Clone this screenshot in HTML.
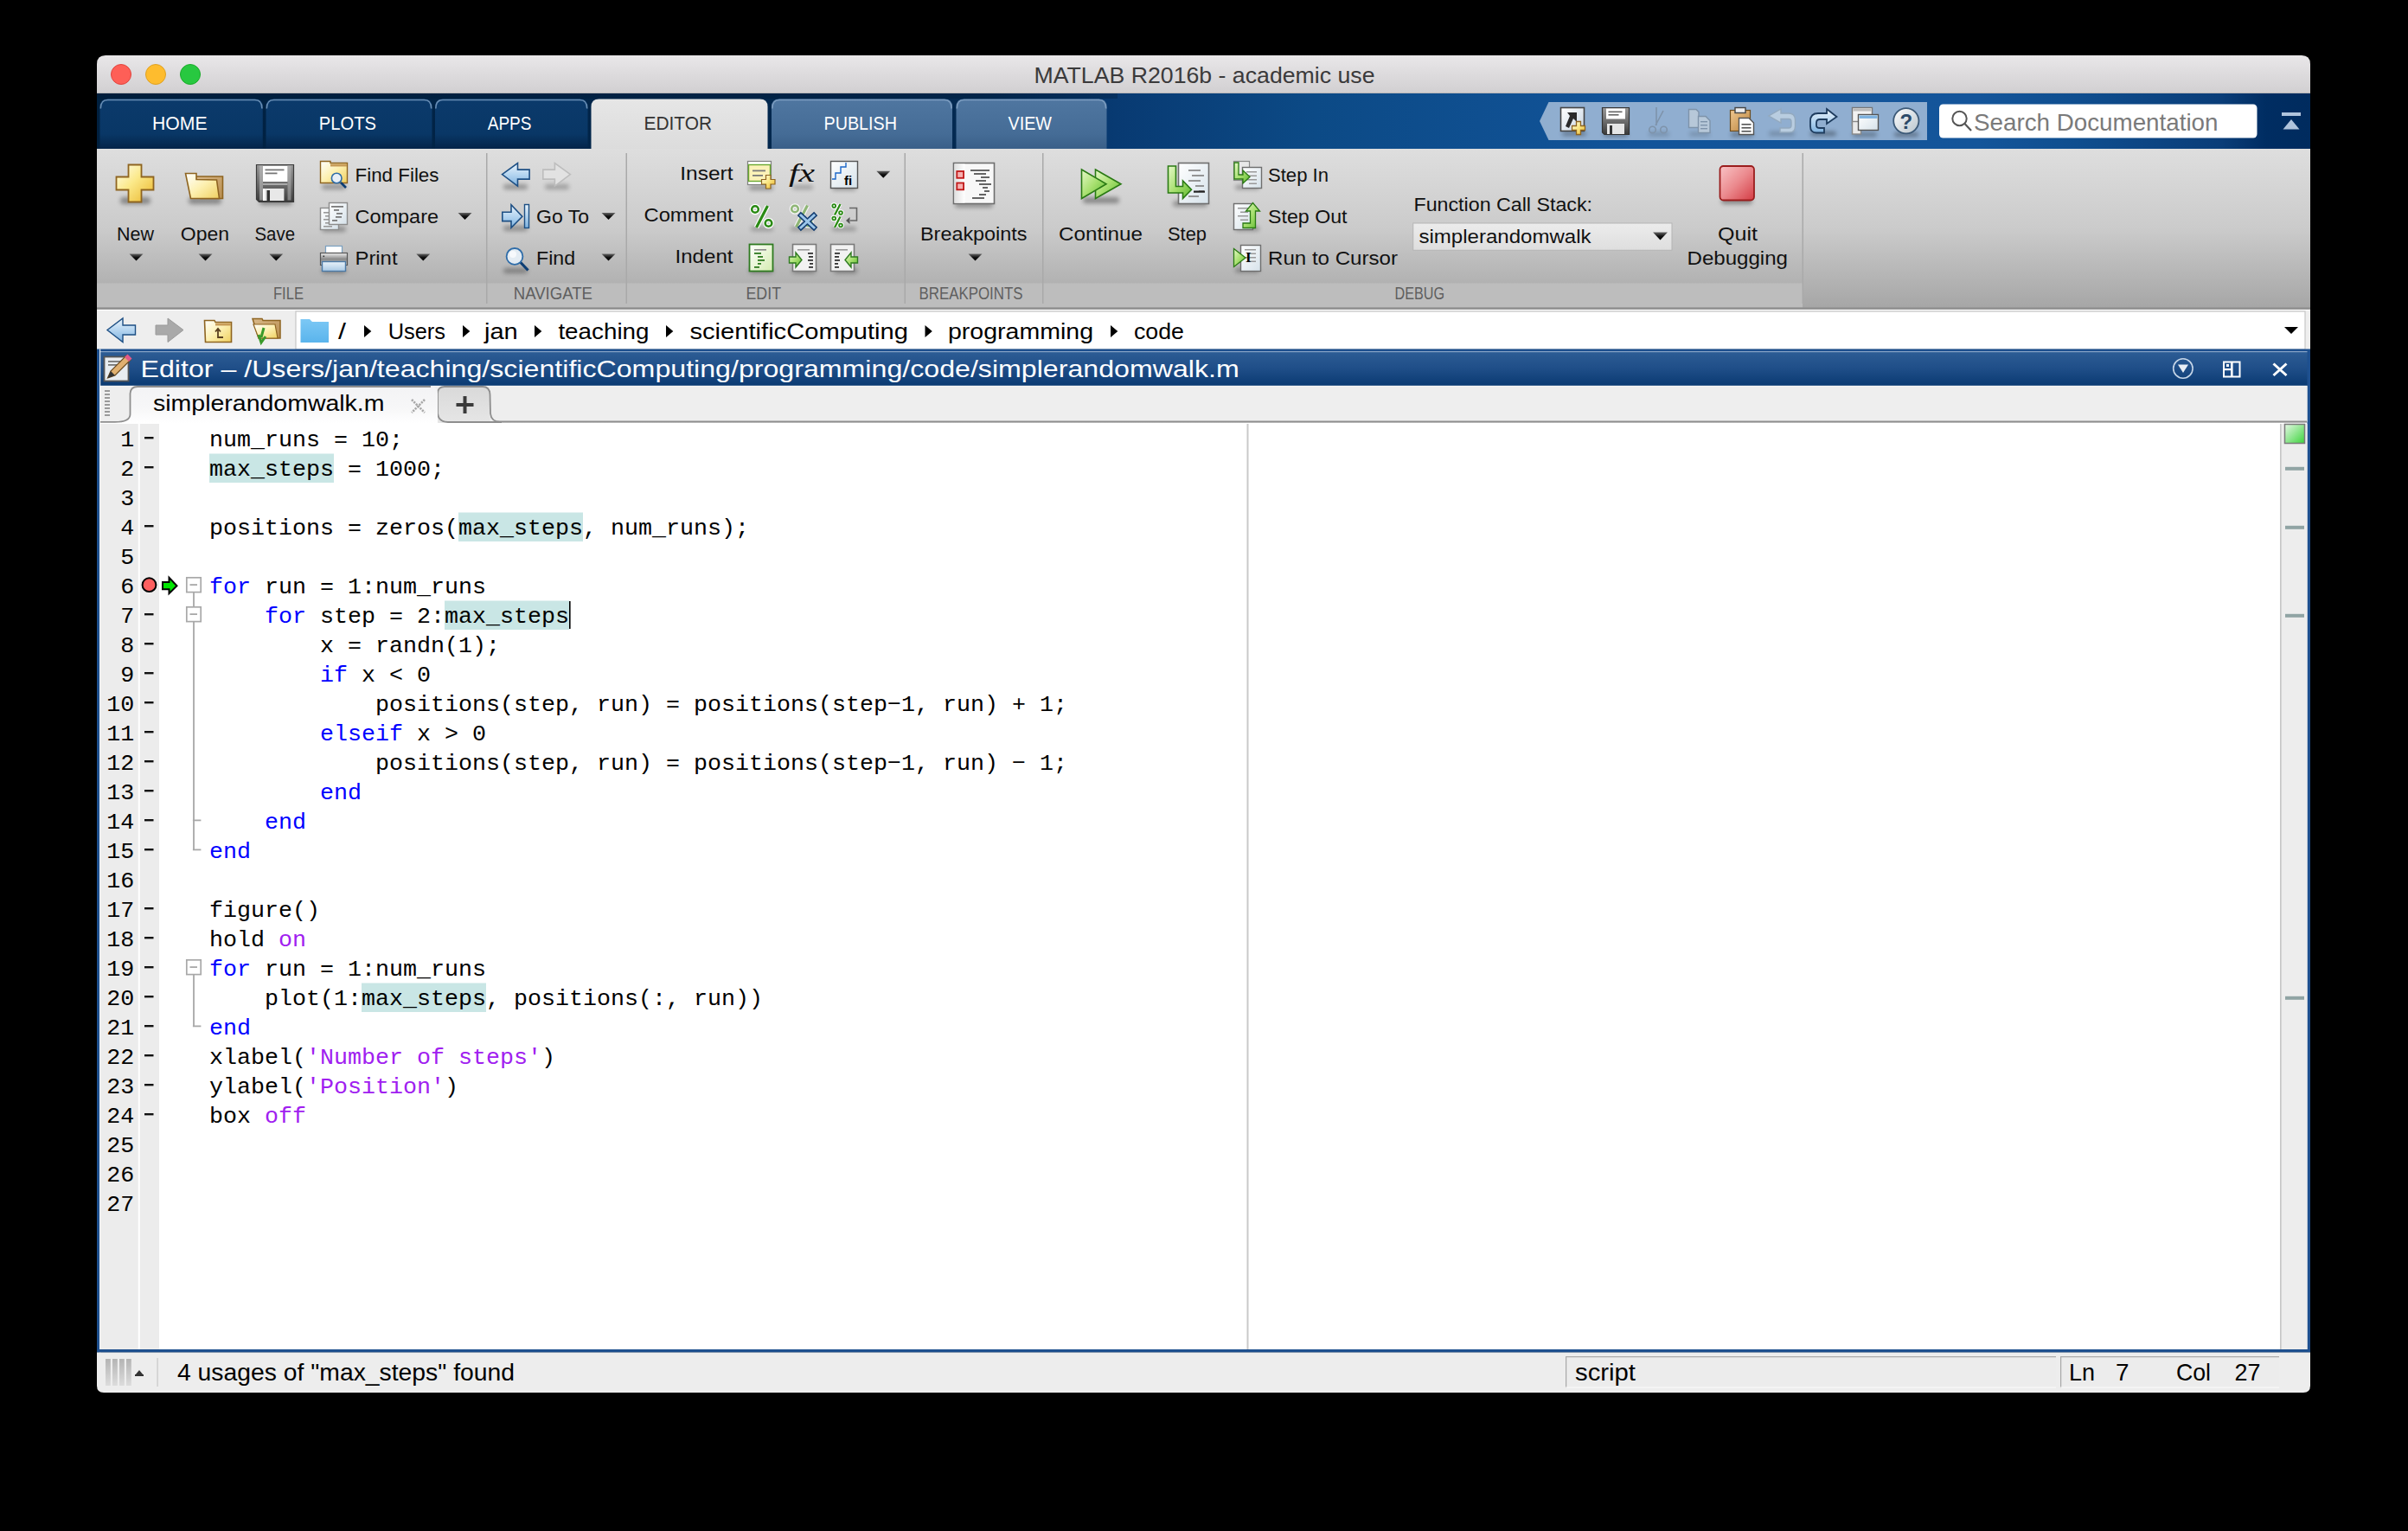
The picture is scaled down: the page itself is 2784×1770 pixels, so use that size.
<!DOCTYPE html><html><head><meta charset="utf-8"><style>html,body{margin:0;padding:0;background:#000;overflow:hidden}svg{display:block}</style></head><body><svg width="2784" height="1770" viewBox="0 0 2784 1770"><defs><filter id="blur2" x="-30%" y="-100%" width="160%" height="300%"><feGaussianBlur stdDeviation="2.6"/></filter><filter id="blur1" x="-30%" y="-100%" width="160%" height="300%"><feGaussianBlur stdDeviation="1"/></filter><linearGradient id="gold" x1="0" y1="0" x2="1" y2="1"><stop offset="0" stop-color="#fffef0"/><stop offset="0.45" stop-color="#fbe98a"/><stop offset="1" stop-color="#eab52a"/></linearGradient><linearGradient id="goldf" x1="0" y1="0" x2="1" y2="1"><stop offset="0" stop-color="#ffffff"/><stop offset="0.5" stop-color="#fdf0b0"/><stop offset="1" stop-color="#efd060"/></linearGradient><linearGradient id="tan" x1="0" y1="0" x2="1" y2="1"><stop offset="0" stop-color="#d9b98a"/><stop offset="1" stop-color="#b88d4e"/></linearGradient><linearGradient id="floppy" x1="0" y1="0" x2="0" y2="1"><stop offset="0" stop-color="#9a9a9a"/><stop offset="0.5" stop-color="#6e6e6e"/><stop offset="1" stop-color="#3a3a3a"/></linearGradient><linearGradient id="blueArrow" x1="0" y1="0" x2="0" y2="1"><stop offset="0" stop-color="#eaf4fc"/><stop offset="0.5" stop-color="#b5d5f0"/><stop offset="1" stop-color="#7eb2df"/></linearGradient><linearGradient id="page" x1="0" y1="0" x2="1" y2="1"><stop offset="0" stop-color="#ffffff"/><stop offset="1" stop-color="#d6e2ea"/></linearGradient><linearGradient id="pageg" x1="0" y1="0" x2="1" y2="1"><stop offset="0" stop-color="#ffffff"/><stop offset="1" stop-color="#c8d9c8"/></linearGradient><linearGradient id="greenA" x1="0" y1="0" x2="1" y2="1"><stop offset="0" stop-color="#e6f9c8"/><stop offset="0.5" stop-color="#a8e070"/><stop offset="1" stop-color="#5cb82c"/></linearGradient><linearGradient id="greenPage" x1="0" y1="0" x2="1" y2="1"><stop offset="0" stop-color="#ffffff"/><stop offset="1" stop-color="#d4ecb0"/></linearGradient><linearGradient id="redq" x1="0" y1="0" x2="1" y2="1"><stop offset="0" stop-color="#f9c4c6"/><stop offset="0.5" stop-color="#eb8a8e"/><stop offset="1" stop-color="#d43c44"/></linearGradient><linearGradient id="printer" x1="0" y1="0" x2="0" y2="1"><stop offset="0" stop-color="#f0f0f0"/><stop offset="0.5" stop-color="#8a8a8a"/><stop offset="1" stop-color="#c8c8c8"/></linearGradient><linearGradient id="lightblue" x1="0" y1="0" x2="0" y2="1"><stop offset="0" stop-color="#eaf3fa"/><stop offset="1" stop-color="#a9c9e4"/></linearGradient><linearGradient id="arrowTri" x1="0" y1="0" x2="0" y2="1"><stop offset="0" stop-color="#666"/><stop offset="0.5" stop-color="#111"/><stop offset="1" stop-color="#000"/></linearGradient><clipPath id="win"><path d="M112,74 Q112,64 122,64 L2661,64 Q2671,64 2671,74 L2671,1602 Q2671,1610 2663,1610 L120,1610 Q112,1610 112,1602 Z"/></clipPath><linearGradient id="tb" x1="0" y1="0" x2="0" y2="1"><stop offset="0" stop-color="#e9e7e9"/><stop offset="1" stop-color="#d1cfd1"/></linearGradient><linearGradient id="strip" x1="0" y1="0" x2="1" y2="0"><stop offset="0" stop-color="#00203f"/><stop offset="0.4" stop-color="#042a52"/><stop offset="0.46" stop-color="#083a72"/><stop offset="0.55" stop-color="#0c4a86"/><stop offset="0.7" stop-color="#12549a"/><stop offset="0.85" stop-color="#14559a"/><stop offset="0.894" stop-color="#0f4e8f"/><stop offset="0.96" stop-color="#0a3d78"/><stop offset="0.98" stop-color="#002d62"/><stop offset="1" stop-color="#002b5e"/></linearGradient><linearGradient id="tabdark" x1="0" y1="0" x2="0" y2="1"><stop offset="0" stop-color="#0b3a6b"/><stop offset="0.7" stop-color="#093766"/><stop offset="1" stop-color="#042449"/></linearGradient><linearGradient id="tablight" x1="0" y1="0" x2="0" y2="1"><stop offset="0" stop-color="#4f76a0"/><stop offset="0.7" stop-color="#456c96"/><stop offset="1" stop-color="#3a5f88"/></linearGradient><linearGradient id="tabsel" x1="0" y1="0" x2="0" y2="1"><stop offset="0" stop-color="#e6e6e6"/><stop offset="1" stop-color="#dcdcdc"/></linearGradient><linearGradient id="rib" x1="0" y1="0" x2="0" y2="1"><stop offset="0" stop-color="#dedede"/><stop offset="0.5" stop-color="#cbcbcb"/><stop offset="1" stop-color="#a6a6a6"/></linearGradient><linearGradient id="scbg" x1="0" y1="0" x2="1" y2="1"><stop offset="0" stop-color="#ffffff"/><stop offset="1" stop-color="#c9d6e2"/></linearGradient><linearGradient id="clip" x1="0" y1="0" x2="1" y2="1"><stop offset="0" stop-color="#f0c890"/><stop offset="1" stop-color="#b8823c"/></linearGradient><linearGradient id="helpg" x1="0" y1="0" x2="1" y2="1"><stop offset="0" stop-color="#ffffff"/><stop offset="1" stop-color="#b8c4cc"/></linearGradient><linearGradient id="ddbox" x1="0" y1="0" x2="0" y2="1"><stop offset="0" stop-color="#ececec"/><stop offset="1" stop-color="#dedede"/></linearGradient><linearGradient id="bpstrip" x1="0" y1="0" x2="1" y2="0"><stop offset="0" stop-color="#e0e0e0"/><stop offset="1" stop-color="#ffffff"/></linearGradient><linearGradient id="bluef" x1="0" y1="0" x2="0" y2="1"><stop offset="0" stop-color="#7cc8f5"/><stop offset="1" stop-color="#5ab4ec"/></linearGradient><linearGradient id="edtitle" x1="0" y1="0" x2="0" y2="1"><stop offset="0" stop-color="#2d5d95"/><stop offset="0.5" stop-color="#1f4e88"/><stop offset="1" stop-color="#0a3a72"/></linearGradient><linearGradient id="seltab" x1="0" y1="0" x2="0" y2="1"><stop offset="0" stop-color="#f3f3f5"/><stop offset="0.6" stop-color="#f7f7f8"/><stop offset="1" stop-color="#ffffff"/></linearGradient><linearGradient id="plustab" x1="0" y1="0" x2="0" y2="1"><stop offset="0" stop-color="#d9d9d9"/><stop offset="1" stop-color="#e6e6e6"/></linearGradient><linearGradient id="okgreen" x1="0" y1="0" x2="1" y2="1"><stop offset="0" stop-color="#e6f8e6"/><stop offset="1" stop-color="#3bd43b"/></linearGradient><linearGradient id="grip" x1="0" y1="0" x2="0" y2="1"><stop offset="0" stop-color="#b4b4b4"/><stop offset="1" stop-color="#dcdcdc"/></linearGradient></defs><rect x="0" y="0" width="2784" height="1770" fill="#000" /><g clip-path="url(#win)"><rect x="112" y="64" width="2559" height="44" fill="url(#tb)" /><rect x="112" y="107" width="2559" height="1" fill="#b9b7b9" /><circle cx="140" cy="86" r="11.5" fill="#fe5f57" stroke="#e0443e" stroke-width="1"/><circle cx="180" cy="86" r="11.5" fill="#febc2e" stroke="#dea123" stroke-width="1"/><circle cx="220" cy="86" r="11.5" fill="#28c840" stroke="#1aab29" stroke-width="1"/><text x="1195.5" y="96" font-family="Liberation Sans" font-size="26.5" fill="#3b3a3b" textLength="394" lengthAdjust="spacingAndGlyphs"  xml:space="preserve">MATLAB R2016b - academic use</text><rect x="112" y="108" width="2559" height="64" fill="url(#strip)" /><rect x="112" y="108" width="1180" height="6" fill="#001b36" opacity="0.3"/><path d="M115.5,172 L115.5,123.5 Q115.5,114.5 124.5,114.5 L294.75,114.5 Q303.75,114.5 303.75,123.5 L303.75,172 Z" fill="url(#tabdark)"/><path d="M116.3,125.5 Q116.3,115.5 124.5,115.5 L294.75,115.5 Q302.95,115.5 302.95,125.5" fill="none" stroke="#6a8fb5" stroke-width="1.6"/><text x="176" y="150" font-family="Liberation Sans" font-size="22.5" fill="#ffffff" textLength="63.5" lengthAdjust="spacingAndGlyphs"  xml:space="preserve">HOME</text><path d="M307.5,172 L307.5,123.5 Q307.5,114.5 316.5,114.5 L490.5,114.5 Q499.5,114.5 499.5,123.5 L499.5,172 Z" fill="url(#tabdark)"/><path d="M308.3,125.5 Q308.3,115.5 316.5,115.5 L490.5,115.5 Q498.7,115.5 498.7,125.5" fill="none" stroke="#6a8fb5" stroke-width="1.6"/><text x="368.75" y="150" font-family="Liberation Sans" font-size="22.5" fill="#ffffff" textLength="66.25" lengthAdjust="spacingAndGlyphs"  xml:space="preserve">PLOTS</text><path d="M503,172 L503,123.5 Q503,114.5 512,114.5 L670.5,114.5 Q679.5,114.5 679.5,123.5 L679.5,172 Z" fill="url(#tabdark)"/><path d="M503.8,125.5 Q503.8,115.5 512,115.5 L670.5,115.5 Q678.7,115.5 678.7,125.5" fill="none" stroke="#6a8fb5" stroke-width="1.6"/><text x="563.75" y="150" font-family="Liberation Sans" font-size="22.5" fill="#ffffff" textLength="50.75" lengthAdjust="spacingAndGlyphs"  xml:space="preserve">APPS</text><path d="M683.5,172 L683.5,123.5 Q683.5,114.5 692.5,114.5 L878.5,114.5 Q887.5,114.5 887.5,123.5 L887.5,172 Z" fill="url(#tabsel)"/><text x="744.5" y="150" font-family="Liberation Sans" font-size="22.5" fill="#333333" textLength="78.5" lengthAdjust="spacingAndGlyphs"  xml:space="preserve">EDITOR</text><path d="M892,172 L892,123.5 Q892,114.5 901,114.5 L1092,114.5 Q1101,114.5 1101,123.5 L1101,172 Z" fill="url(#tablight)"/><path d="M892.8,125.5 Q892.8,115.5 901,115.5 L1092,115.5 Q1100.2,115.5 1100.2,125.5" fill="none" stroke="#7d9dc0" stroke-width="1.6"/><text x="952.5" y="150" font-family="Liberation Sans" font-size="22.5" fill="#ffffff" textLength="84.5" lengthAdjust="spacingAndGlyphs"  xml:space="preserve">PUBLISH</text><path d="M1105.5,172 L1105.5,123.5 Q1105.5,114.5 1114.5,114.5 L1270.5,114.5 Q1279.5,114.5 1279.5,123.5 L1279.5,172 Z" fill="url(#tablight)"/><path d="M1106.3,125.5 Q1106.3,115.5 1114.5,115.5 L1270.5,115.5 Q1278.7,115.5 1278.7,125.5" fill="none" stroke="#7d9dc0" stroke-width="1.6"/><text x="1165.5" y="150" font-family="Liberation Sans" font-size="22.5" fill="#ffffff" textLength="50.5" lengthAdjust="spacingAndGlyphs"  xml:space="preserve">VIEW</text><rect x="112" y="172" width="2559" height="184" fill="url(#rib)" /><path d="M1780,140 L1790.5,118 L2228,118 L2228,162 L1790.5,162 Z" fill="#9ab5d4" opacity="0.93"/><rect x="1806" y="152" width="28" height="5" rx="2.5" fill="#000" opacity="0.3" filter="url(#blur2)"/><rect x="1804.5" y="124.5" width="27" height="27" fill="url(#scbg)" stroke="#444" stroke-width="1.6"/><path d="M1812,130 L1823,130 L1823,141 L1819,137 L1814,148 L1810,146 L1815,134 Z" fill="#2a2a2a"/><path d="M1822.5,140.5 L1827.5,140.5 L1827.5,145.5 L1832.5,145.5 L1832.5,150.5 L1827.5,150.5 L1827.5,155.5 L1822.5,155.5 L1822.5,150.5 L1817.5,150.5 L1817.5,145.5 L1822.5,145.5 Z" fill="url(#gold)" stroke="#8e6420" stroke-width="1.3"/><rect x="1854" y="153" width="28" height="5" rx="2.5" fill="#000" opacity="0.3" filter="url(#blur2)"/><path d="M1852.5,124.5 L1883.5,124.5 L1883.5,155.5 L1855,155.5 L1852.5,153 Z" fill="url(#floppy)" stroke="#333" stroke-width="1.2"/><rect x="1857" y="125.5" width="22" height="12" fill="#ffffff" /><rect x="1859.5" y="128.5" width="16" height="1.6" fill="#666" /><rect x="1859.5" y="132" width="12" height="1.6" fill="#666" /><rect x="1858" y="143" width="20" height="12" fill="#e6e6e6" /><rect x="1861" y="145" width="3" height="10" fill="#333" /><rect x="1906" y="153" width="24" height="4" rx="2.0" fill="#000" opacity="0.2" filter="url(#blur2)"/><g stroke="#7e93aa" stroke-width="1.6" fill="none"><path d="M1915,124 L1915,145 M1923,128 L1914,145"/><circle cx="1910.5" cy="150" r="3.8"/><circle cx="1923.5" cy="150" r="3.8"/></g><rect x="1953" y="153" width="24" height="4" rx="2.0" fill="#000" opacity="0.2" filter="url(#blur2)"/><g fill="#b7c8d9" stroke="#7e93aa" stroke-width="1.4"><path d="M1952.5,126.5 L1961,126.5 L1964,129.5 L1964,147.5 L1952.5,147.5 Z"/><path d="M1963.5,134.5 L1972,134.5 L1977,139.5 L1977,153.5 L1963.5,153.5 Z"/></g><rect x="1966" y="140" width="8" height="1.4" fill="#7e93aa" /><rect x="1966" y="144" width="8" height="1.4" fill="#7e93aa" /><rect x="1966" y="148" width="8" height="1.4" fill="#7e93aa" /><rect x="2001" y="153" width="26" height="5" rx="2.5" fill="#000" opacity="0.3" filter="url(#blur2)"/><rect x="2000.5" y="127.5" width="23" height="24" fill="url(#clip)" stroke="#6e4e20" stroke-width="1.2"/><rect x="2006" y="124.5" width="12" height="6" fill="#eee" stroke="#444" stroke-width="1.4"/><path d="M2010.5,136.5 L2022,136.5 L2027.5,142 L2027.5,155.5 L2010.5,155.5 Z" fill="#fff" stroke="#555" stroke-width="1.4"/><rect x="2013.5" y="143" width="11" height="1.6" fill="#555" /><rect x="2013.5" y="147" width="11" height="1.6" fill="#555" /><rect x="2013.5" y="151" width="11" height="1.6" fill="#555" /><rect x="2045" y="152" width="30" height="5" rx="2.5" fill="#000" opacity="0.2" filter="url(#blur2)"/><path d="M2059,126 L2045,134 L2059,142 L2059,137.5 L2068,137.5 Q2071,137.5 2071,141 L2071,145 Q2071,148 2068,148 L2058,148 L2058,153 L2069,153 Q2075.5,153 2075.5,146 L2075.5,139 Q2075.5,131 2068,131 L2059,131 Z" fill="#b9cde0" stroke="#93a9be" stroke-width="1.4"/><rect x="2093" y="152" width="30" height="5" rx="2.5" fill="#000" opacity="0.35" filter="url(#blur2)"/><path d="M2112,126 L2123.5,135 L2112,143 L2112,138 L2104,138 Q2100,138 2100,142 L2100,145 Q2100,148 2104,148 L2109,148 L2109,153.5 L2100,153.5 Q2093,153.5 2093,146 L2093,140 Q2093,131 2102,131 L2112,131 Z" fill="url(#blueArrow)" stroke="#1e3c5e" stroke-width="1.8"/><rect x="2142" y="153" width="28" height="5" rx="2.5" fill="#000" opacity="0.3" filter="url(#blur2)"/><rect x="2141.5" y="124.5" width="23" height="21" fill="#f2f2f2" stroke="#777" stroke-width="1.4"/><rect x="2142.5" y="125.5" width="21" height="3" fill="#bbb" /><rect x="2141.5" y="140.5" width="10" height="14.5" fill="#eaeaea" stroke="#888" stroke-width="1.4"/><rect x="2148.5" y="132.5" width="23" height="18" fill="url(#page)" stroke="#555" stroke-width="1.4"/><rect x="2149.5" y="133.5" width="21" height="3.5" fill="#7fb3e0" /><rect x="2190" y="153" width="28" height="5" rx="2.5" fill="#000" opacity="0.35" filter="url(#blur2)"/><circle cx="2203.8" cy="139.8" r="14.6" fill="url(#helpg)" stroke="#3c5a78" stroke-width="1.8"/><text x="2203.8" y="149" font-family="Liberation Sans" font-weight="bold" font-size="24" fill="#2c4a68" text-anchor="middle">?</text><rect x="2242" y="120.5" width="367.5" height="39" fill="#ffffff" rx="4.5"/><circle cx="2265.5" cy="137" r="8.2" fill="none" stroke="#555" stroke-width="2"/><path d="M2271.5,143 L2279,151" stroke="#555" stroke-width="2.2"/><text x="2282" y="150.5" font-family="Liberation Sans" font-size="28" fill="#7a7a7a" textLength="282.5" lengthAdjust="spacingAndGlyphs"  xml:space="preserve">Search Documentation</text><rect x="2638" y="130" width="22" height="4" fill="#b0c4dc" /><path d="M2649,138 L2658.5,149.6 L2639.5,149.6 Z" fill="#b0c4dc"/><rect x="112" y="327.5" width="1972" height="28" fill="#bdbdbd" /><rect x="112" y="355.5" width="2559" height="2" fill="#8c8c8c" /><rect x="562.0" y="177" width="1.5" height="174" fill="#a9a9a9" /><rect x="723.5" y="177" width="1.5" height="174" fill="#a9a9a9" /><rect x="1045.5" y="177" width="1.5" height="174" fill="#a9a9a9" /><rect x="1205.0" y="177" width="1.5" height="174" fill="#a9a9a9" /><rect x="2083.5" y="177" width="1.5" height="174" fill="#a9a9a9" /><text x="135" y="278" font-family="Liberation Sans" font-size="22.5" fill="#111111" textLength="43" lengthAdjust="spacingAndGlyphs"  xml:space="preserve">New</text><path d="M149.5,293.5 L165.5,293.5 L157.5,301.5 Z" fill="url(#arrowTri)"/><text x="208.75" y="278" font-family="Liberation Sans" font-size="22.5" fill="#111111" textLength="56.25" lengthAdjust="spacingAndGlyphs"  xml:space="preserve">Open</text><path d="M229.5,293.5 L245.5,293.5 L237.5,301.5 Z" fill="url(#arrowTri)"/><text x="294.5" y="278" font-family="Liberation Sans" font-size="22.5" fill="#111111" textLength="46.5" lengthAdjust="spacingAndGlyphs"  xml:space="preserve">Save</text><path d="M311.25,293.5 L327.25,293.5 L319.25,301.5 Z" fill="url(#arrowTri)"/><text x="410.5" y="210" font-family="Liberation Sans" font-size="22.5" fill="#111111" textLength="97" lengthAdjust="spacingAndGlyphs"  xml:space="preserve">Find Files</text><text x="410.5" y="258" font-family="Liberation Sans" font-size="22.5" fill="#111111" textLength="96.5" lengthAdjust="spacingAndGlyphs"  xml:space="preserve">Compare</text><path d="M529.5,246.0 L545.5,246.0 L537.5,254.0 Z" fill="url(#arrowTri)"/><text x="410.5" y="306" font-family="Liberation Sans" font-size="22.5" fill="#111111" textLength="49" lengthAdjust="spacingAndGlyphs"  xml:space="preserve">Print</text><path d="M481.25,293.5 L497.25,293.5 L489.25,301.5 Z" fill="url(#arrowTri)"/><text x="316" y="345.75" font-family="Liberation Sans" font-size="19.5" fill="#5f5f5f" textLength="35" lengthAdjust="spacingAndGlyphs"  xml:space="preserve">FILE</text><text x="620" y="258" font-family="Liberation Sans" font-size="22.5" fill="#111111" textLength="61" lengthAdjust="spacingAndGlyphs"  xml:space="preserve">Go To</text><path d="M695.5,246.0 L711.5,246.0 L703.5,254.0 Z" fill="url(#arrowTri)"/><text x="620" y="306" font-family="Liberation Sans" font-size="22.5" fill="#111111" textLength="45" lengthAdjust="spacingAndGlyphs"  xml:space="preserve">Find</text><path d="M695.5,293.5 L711.5,293.5 L703.5,301.5 Z" fill="url(#arrowTri)"/><text x="593.75" y="345.75" font-family="Liberation Sans" font-size="19.5" fill="#5f5f5f" textLength="91.25" lengthAdjust="spacingAndGlyphs"  xml:space="preserve">NAVIGATE</text><text x="786.25" y="208" font-family="Liberation Sans" font-size="22.5" fill="#111111" textLength="61.25" lengthAdjust="spacingAndGlyphs"  xml:space="preserve">Insert</text><text x="744.5" y="256" font-family="Liberation Sans" font-size="22.5" fill="#111111" textLength="103" lengthAdjust="spacingAndGlyphs"  xml:space="preserve">Comment</text><text x="780.5" y="303.75" font-family="Liberation Sans" font-size="22.5" fill="#111111" textLength="67" lengthAdjust="spacingAndGlyphs"  xml:space="preserve">Indent</text><path d="M1013.25,197.75 L1029.25,197.75 L1021.25,205.75 Z" fill="url(#arrowTri)"/><text x="862.5" y="345.75" font-family="Liberation Sans" font-size="19.5" fill="#5f5f5f" textLength="40.5" lengthAdjust="spacingAndGlyphs"  xml:space="preserve">EDIT</text><text x="1064" y="278" font-family="Liberation Sans" font-size="22.5" fill="#111111" textLength="123.5" lengthAdjust="spacingAndGlyphs"  xml:space="preserve">Breakpoints</text><path d="M1119.5,293.5 L1135.5,293.5 L1127.5,301.5 Z" fill="url(#arrowTri)"/><text x="1062.5" y="345.75" font-family="Liberation Sans" font-size="19.5" fill="#5f5f5f" textLength="120" lengthAdjust="spacingAndGlyphs"  xml:space="preserve">BREAKPOINTS</text><text x="1224" y="278" font-family="Liberation Sans" font-size="22.5" fill="#111111" textLength="97" lengthAdjust="spacingAndGlyphs"  xml:space="preserve">Continue</text><text x="1350" y="278" font-family="Liberation Sans" font-size="22.5" fill="#111111" textLength="45" lengthAdjust="spacingAndGlyphs"  xml:space="preserve">Step</text><text x="1466" y="210" font-family="Liberation Sans" font-size="22.5" fill="#111111" textLength="70" lengthAdjust="spacingAndGlyphs"  xml:space="preserve">Step In</text><text x="1466" y="258" font-family="Liberation Sans" font-size="22.5" fill="#111111" textLength="91.5" lengthAdjust="spacingAndGlyphs"  xml:space="preserve">Step Out</text><text x="1466" y="306" font-family="Liberation Sans" font-size="22.5" fill="#111111" textLength="150" lengthAdjust="spacingAndGlyphs"  xml:space="preserve">Run to Cursor</text><text x="1634.5" y="243.75" font-family="Liberation Sans" font-size="22.5" fill="#111111" textLength="206.5" lengthAdjust="spacingAndGlyphs"  xml:space="preserve">Function Call Stack:</text><rect x="1633.75" y="258" width="299.25" height="31.25" fill="url(#ddbox)" stroke="#b4b4b4" stroke-width="1"/><text x="1640.5" y="281" font-family="Liberation Sans" font-size="22.5" fill="#111" textLength="199" lengthAdjust="spacingAndGlyphs"  xml:space="preserve">simplerandomwalk</text><path d="M1911.0,268.5 L1928.0,268.5 L1919.5,277.5 Z" fill="url(#arrowTri)"/><text x="1986" y="278" font-family="Liberation Sans" font-size="22.5" fill="#111111" textLength="46" lengthAdjust="spacingAndGlyphs"  xml:space="preserve">Quit</text><text x="1950.5" y="306" font-family="Liberation Sans" font-size="22.5" fill="#111111" textLength="116.5" lengthAdjust="spacingAndGlyphs"  xml:space="preserve">Debugging</text><text x="1612.5" y="345.75" font-family="Liberation Sans" font-size="19.5" fill="#5f5f5f" textLength="57.5" lengthAdjust="spacingAndGlyphs"  xml:space="preserve">DEBUG</text><rect x="139" y="228" width="35" height="8" rx="4.0" fill="#000" opacity="0.35" filter="url(#blur2)"/><path d="M148.5,190.5 L163.5,190.5 L163.5,204.5 L177.5,204.5 L177.5,219.5 L163.5,219.5 L163.5,233.5 L148.5,233.5 L148.5,219.5 L134.5,219.5 L134.5,204.5 L148.5,204.5 Z" fill="url(#gold)" stroke="#8e6420" stroke-width="1.8"/><rect x="218" y="228" width="38" height="8" rx="4.0" fill="#000" opacity="0.35" filter="url(#blur2)"/><path d="M226,204 L257.5,204 L257.5,229.5 L232,229.5 Z" fill="url(#tan)" stroke="#8e6420" stroke-width="1.6"/><path d="M214.5,200.5 L227,200.5 L227,207.5 L250.5,208 L253.5,229.5 L220.5,229.5 Z" fill="url(#goldf)" stroke="#8e6420" stroke-width="1.6"/><rect x="300" y="229" width="38" height="8" rx="4.0" fill="#000" opacity="0.35" filter="url(#blur2)"/><path d="M296.5,190.5 L339.5,190.5 L339.5,233.5 L299.5,233.5 L296.5,230.5 Z" fill="url(#floppy)" stroke="#3a3a3a" stroke-width="1.2"/><rect x="300" y="191.5" width="4" height="40" fill="#bdbdbd" opacity="0.6"/><rect x="332.5" y="191.5" width="4" height="40" fill="#bdbdbd" opacity="0.5"/><rect x="304" y="192" width="28.4" height="18" fill="#ffffff" /><rect x="306.5" y="195.5" width="22" height="1.8" fill="#777" /><rect x="306.5" y="199.5" width="14" height="1.8" fill="#777" /><rect x="304" y="212" width="28.4" height="2" fill="#aaa" /><rect x="304" y="218" width="24.4" height="14" fill="#e8e8e8" /><rect x="304" y="218" width="2" height="14" fill="#fff" /><rect x="308.5" y="220" width="3.5" height="12" fill="#333" /><rect x="372" y="213" width="28" height="6" rx="3.0" fill="#000" opacity="0.3" filter="url(#blur2)"/><path d="M370.5,186.5 L382,186.5 L382,188.5 L401.5,188.5 L401.5,211.5 L370.5,211.5 Z" fill="url(#goldf)" stroke="#8e6420" stroke-width="1.4"/><rect x="382" y="189.5" width="19" height="3" fill="#c89c58" /><path d="M394,211 L400,217" stroke="#0d3d73" stroke-width="2.6"/><circle cx="389.2" cy="206" r="5.8" fill="#e8eff6" stroke="#2e6ca8" stroke-width="1.6"/><rect x="372" y="262" width="28" height="6" rx="3.0" fill="#000" opacity="0.3" filter="url(#blur2)"/><rect x="370.5" y="240.5" width="21" height="25" fill="url(#page)" stroke="#8c8c8c" stroke-width="1.4"/><rect x="374" y="245" width="8" height="1.6" fill="#9a9a9a" /><rect x="376" y="249" width="6" height="1.6" fill="#9a9a9a" /><rect x="374" y="253" width="6" height="1.6" fill="#9a9a9a" /><rect x="376" y="257" width="6" height="1.6" fill="#9a9a9a" /><rect x="374" y="261" width="10" height="1.6" fill="#9a9a9a" /><rect x="380.5" y="234.5" width="21" height="25" fill="url(#page)" stroke="#8c8c8c" stroke-width="1.4"/><rect x="383" y="238" width="14" height="1.8" fill="#7a7a7a" /><rect x="386" y="242" width="6" height="1.8" fill="#7a7a7a" /><rect x="389" y="246" width="7" height="1.8" fill="#7a7a7a" /><rect x="388" y="250" width="7" height="1.8" fill="#7a7a7a" /><rect x="384" y="254" width="6" height="1.8" fill="#7a7a7a" /><rect x="372" y="310" width="28" height="6" rx="3.0" fill="#000" opacity="0.3" filter="url(#blur2)"/><rect x="376.5" y="284.5" width="19" height="9" fill="#ffffff" stroke="#7aa0c0" stroke-width="1.2"/><rect x="370.5" y="292.5" width="31" height="14" fill="url(#printer)" stroke="#555" stroke-width="1.2"/><rect x="373.5" y="295.5" width="1.6" height="1.6" fill="#333" /><rect x="372.5" y="302.5" width="27" height="11" fill="url(#lightblue)" stroke="#4c7aa6" stroke-width="1.4"/><rect x="582" y="213" width="28" height="6" rx="3.0" fill="#000" opacity="0.3" filter="url(#blur2)"/><path d="M580.5,201.6 L598.5,188.6 L598.5,196.1 L612.1,196.1 L612.1,207.1 L598.5,207.1 L598.5,215.1 Z" fill="url(#blueArrow)" stroke="#1d4f84" stroke-width="1.6" stroke-linejoin="miter"/><rect x="630" y="213" width="28" height="6" rx="3.0" fill="#000" opacity="0.25" filter="url(#blur2)"/><path d="M659.4,201.6 L641.4,188.6 L641.4,196.1 L627.8,196.1 L627.8,207.1 L641.4,207.1 L641.4,215.1 Z" fill="#e2e2e2" stroke="#bdbdbd" stroke-width="1.6"/><rect x="582" y="261" width="28" height="6" rx="3.0" fill="#000" opacity="0.3" filter="url(#blur2)"/><path d="M580.8,245.2 L591.0,245.2 L591.0,236.8 L603.8,250.3 L591.0,263.3 L591.0,255.6 L580.8,255.6 Z" fill="url(#blueArrow)" stroke="#1d4f84" stroke-width="1.6"/><rect x="606.5" y="236.5" width="5" height="27" fill="url(#blueArrow)" stroke="#1d4f84" stroke-width="1.4"/><rect x="582" y="310" width="28" height="6" rx="3.0" fill="#000" opacity="0.3" filter="url(#blur2)"/><path d="M601,302.5 L610.5,312.5" stroke="#0d3d73" stroke-width="3.2"/><circle cx="595" cy="296.4" r="9.4" fill="#e4ecf3" stroke="#2e6ca8" stroke-width="1.8"/><circle cx="593" cy="294" r="4" fill="#fff" opacity="0.7"/><rect x="866" y="214" width="28" height="6" rx="3.0" fill="#000" opacity="0.3" filter="url(#blur2)"/><rect x="864.5" y="186.5" width="27" height="27" fill="#ffffff" stroke="#808080" stroke-width="1.2"/><rect x="865.5" y="190.5" width="25" height="19" fill="#fbf2b8" stroke="#6aa830" stroke-width="1.4"/><rect x="870" y="196.5" width="15" height="1.8" fill="#7a7a7a" /><rect x="870" y="202" width="12" height="1.8" fill="#7a7a7a" /><path d="M885.5,202.5 L891,202.5 L891,207.5 L896,207.5 L896,213 L891,213 L891,218 L885.5,218 L885.5,213 L880.5,213 L880.5,207.5 L885.5,207.5 Z" fill="url(#gold)" stroke="#8e6420" stroke-width="1.2"/><rect x="916" y="214" width="24" height="5" rx="2.5" fill="#000" opacity="0.25" filter="url(#blur2)"/><text x="912" y="210" font-family="Liberation Serif" font-style="italic" font-size="30" fill="#111" textLength="30" lengthAdjust="spacingAndGlyphs">fx</text><rect x="962" y="214" width="28" height="6" rx="3.0" fill="#000" opacity="0.3" filter="url(#blur2)"/><rect x="960.5" y="186.5" width="31" height="31" fill="url(#page)" stroke="#555" stroke-width="1.4"/><path d="M962,207 L966,207 L966,200 L972,200 L972,193 L978,193 L978,188" fill="none" stroke="#1a66c8" stroke-width="1.4"/><text x="976" y="213.5" font-family="Liberation Sans" font-size="15" font-weight="bold" fill="#000">fi</text><rect x="868" y="262" width="26" height="5" rx="2.5" fill="#000" opacity="0.25" filter="url(#blur2)"/><g transform="translate(866.5,235) scale(1)" opacity="1"><circle cx="6.5" cy="7" r="3.8" fill="none" stroke="#ffffff" stroke-width="5.0"/><circle cx="22" cy="23" r="3.8" fill="none" stroke="#ffffff" stroke-width="5.0"/><path d="M21,3 L8,28" stroke="#ffffff" stroke-width="5.6"/><circle cx="6.5" cy="7" r="3.8" fill="none" stroke="#2a8a14" stroke-width="2.6"/><circle cx="22" cy="23" r="3.8" fill="none" stroke="#2a8a14" stroke-width="2.6"/><path d="M21,3 L8,28" stroke="#2a8a14" stroke-width="3.2"/></g><rect x="914" y="262" width="28" height="5" rx="2.5" fill="#000" opacity="0.25" filter="url(#blur2)"/><g transform="translate(912.5,234.5) scale(1)" opacity="0.8"><circle cx="6.5" cy="7" r="3.8" fill="none" stroke="#ffffff" stroke-width="5.0"/><circle cx="22" cy="23" r="3.8" fill="none" stroke="#ffffff" stroke-width="5.0"/><path d="M21,3 L8,28" stroke="#ffffff" stroke-width="5.6"/><circle cx="6.5" cy="7" r="3.8" fill="none" stroke="#7fb060" stroke-width="2.6"/><circle cx="22" cy="23" r="3.8" fill="none" stroke="#7fb060" stroke-width="2.6"/><path d="M21,3 L8,28" stroke="#7fb060" stroke-width="3.2"/></g><path d="M926,249 L941,263 M941,249 L926,263" stroke="#123c70" stroke-width="6" stroke-linecap="square"/><path d="M926,249 L941,263 M941,249 L926,263" stroke="#9cc6ea" stroke-width="3" stroke-linecap="square"/><rect x="962" y="262" width="28" height="5" rx="2.5" fill="#000" opacity="0.25" filter="url(#blur2)"/><g transform="translate(961,234.5) scale(0.5)" opacity="1"><circle cx="6.5" cy="7" r="3.8" fill="none" stroke="#ffffff" stroke-width="7.4"/><circle cx="22" cy="23" r="3.8" fill="none" stroke="#ffffff" stroke-width="7.4"/><path d="M21,3 L8,28" stroke="#ffffff" stroke-width="8.0"/><circle cx="6.5" cy="7" r="3.8" fill="none" stroke="#2a8a14" stroke-width="3.676955262170047"/><circle cx="22" cy="23" r="3.8" fill="none" stroke="#2a8a14" stroke-width="3.676955262170047"/><path d="M21,3 L8,28" stroke="#2a8a14" stroke-width="4.525483399593904"/></g><g transform="translate(961,249) scale(0.5)" opacity="1"><circle cx="6.5" cy="7" r="3.8" fill="none" stroke="#ffffff" stroke-width="7.4"/><circle cx="22" cy="23" r="3.8" fill="none" stroke="#ffffff" stroke-width="7.4"/><path d="M21,3 L8,28" stroke="#ffffff" stroke-width="8.0"/><circle cx="6.5" cy="7" r="3.8" fill="none" stroke="#2a8a14" stroke-width="3.676955262170047"/><circle cx="22" cy="23" r="3.8" fill="none" stroke="#2a8a14" stroke-width="3.676955262170047"/><path d="M21,3 L8,28" stroke="#2a8a14" stroke-width="4.525483399593904"/></g><path d="M982,240.5 L990.5,240.5 L990.5,255 L983,255" fill="none" stroke="#666" stroke-width="1.6"/><path d="M982.5,251 L982.5,259 L978,255 Z" fill="#555"/><rect x="866" y="310" width="28" height="6" rx="3.0" fill="#000" opacity="0.3" filter="url(#blur2)"/><rect x="866.5" y="282.5" width="27" height="31" fill="url(#greenPage)" stroke="#2e7a20" stroke-width="1.8"/><rect x="872" y="288" width="14" height="1.6" fill="#888" /><rect x="872" y="292" width="8" height="1.8" fill="#2e7a20" /><rect x="876" y="296" width="6" height="1.8" fill="#2e7a20" /><rect x="876" y="300" width="8" height="1.8" fill="#2e7a20" /><rect x="876" y="304" width="4" height="1.8" fill="#2e7a20" /><rect x="872" y="308" width="6" height="1.8" fill="#2e7a20" /><rect x="916" y="310" width="27" height="6" rx="3.0" fill="#000" opacity="0.3" filter="url(#blur2)"/><rect x="916.5" y="282.5" width="27" height="31" fill="#f2f2f2" stroke="#7a7a7a" stroke-width="1.6"/><rect x="922" y="288" width="14" height="1.6" fill="#999" /><rect x="934" y="292" width="6" height="1.8" fill="#333" /><rect x="935" y="296" width="5" height="1.8" fill="#333" /><rect x="934" y="300" width="6" height="1.8" fill="#333" /><rect x="936" y="304" width="4" height="1.8" fill="#333" /><rect x="935" y="308" width="5" height="1.8" fill="#333" /><path d="M912.5,297.0 L920.0,297.0 L920.0,292.0 L927.0,300.5 L920.0,309.0 L920.0,304.0 L912.5,304.0 Z" fill="url(#greenA)" stroke="#2e7a20" stroke-width="1.4"/><rect x="964" y="310" width="27" height="6" rx="3.0" fill="#000" opacity="0.3" filter="url(#blur2)"/><rect x="960.5" y="282.5" width="27" height="31" fill="#f2f2f2" stroke="#7a7a7a" stroke-width="1.6"/><rect x="966" y="288" width="14" height="1.6" fill="#999" /><rect x="965" y="292" width="6" height="1.8" fill="#333" /><rect x="965" y="296" width="5" height="1.8" fill="#333" /><rect x="965" y="300" width="6" height="1.8" fill="#333" /><rect x="965" y="304" width="4" height="1.8" fill="#333" /><rect x="965" y="308" width="5" height="1.8" fill="#333" /><path d="M991.5,297.0 L984.0,297.0 L984.0,292.0 L977.0,300.5 L984.0,309.0 L984.0,304.0 L991.5,304.0 Z" fill="url(#greenA)" stroke="#2e7a20" stroke-width="1.4"/><rect x="1104" y="233" width="44" height="7" rx="3.5" fill="#000" opacity="0.3" filter="url(#blur2)"/><rect x="1102.5" y="188.5" width="47" height="47" fill="#f8f8f8" stroke="#6e6e6e" stroke-width="1.6"/><rect x="1103.5" y="189.5" width="12" height="45" fill="url(#bpstrip)" /><rect x="1106.3" y="198" width="7.8" height="7.8" fill="#f6b0b0" stroke="#c01818" stroke-width="1.8"/><rect x="1106.3" y="211.5" width="7.8" height="7.8" fill="#f6b0b0" stroke="#c01818" stroke-width="1.8"/><rect x="1122" y="196.1" width="22" height="1.8" fill="#555" /><rect x="1126" y="200.1" width="14" height="1.8" fill="#555" /><rect x="1134" y="204.1" width="10" height="1.8" fill="#555" /><rect x="1128" y="208.1" width="12" height="1.8" fill="#555" /><rect x="1132" y="212.1" width="14" height="1.8" fill="#555" /><rect x="1136" y="216.1" width="6" height="1.8" fill="#555" /><rect x="1138" y="220.1" width="6" height="1.8" fill="#555" /><rect x="1132" y="224.1" width="8" height="1.8" fill="#555" /><rect x="1124" y="228.1" width="14" height="1.8" fill="#555" /><rect x="1252" y="228" width="42" height="7" rx="3.5" fill="#000" opacity="0.35" filter="url(#blur2)"/><path d="M1266.5,196 L1296,212.7 L1266.5,229.5 Z" fill="url(#greenA)" stroke="#2a7a14" stroke-width="1.6"/><path d="M1250.5,196 L1279,212.7 L1250.5,229.5 Z" fill="url(#greenA)" stroke="#2a7a14" stroke-width="1.6"/><rect x="1356" y="232" width="40" height="7" rx="3.5" fill="#000" opacity="0.3" filter="url(#blur2)"/><rect x="1362.5" y="188.5" width="35" height="47" fill="url(#page)" stroke="#6e6e6e" stroke-width="1.6"/><rect x="1374" y="196.1" width="14" height="1.8" fill="#8a8a8a" /><rect x="1378" y="202.1" width="14" height="1.8" fill="#8a8a8a" /><rect x="1374" y="208.1" width="14" height="1.8" fill="#8a8a8a" /><rect x="1382" y="214.1" width="10" height="1.8" fill="#8a8a8a" /><rect x="1386" y="220.1" width="6" height="1.8" fill="#8a8a8a" /><rect x="1374" y="226.1" width="12" height="1.8" fill="#8a8a8a" /><rect x="1380" y="220.5" width="13" height="2.2" fill="#222" /><path d="M1350.5,192.0 L1359.5,192.0 L1359.5,215.5 L1367.5,215.5 L1367.5,209.0 L1377.5,219.3 L1367.5,229.6 L1367.5,223.0 L1350.5,223.0 Z" fill="url(#greenA)" stroke="#2a7a14" stroke-width="1.6"/><rect x="1428" y="214" width="28" height="5" rx="2.5" fill="#000" opacity="0.3" filter="url(#blur2)"/><rect x="1426.5" y="186.5" width="18" height="22" fill="#e8e8e8" stroke="#8a8a8a" stroke-width="1.2"/><rect x="1436.5" y="193.5" width="22" height="24" fill="url(#page)" stroke="#6e6e6e" stroke-width="1.4"/><rect x="1441" y="198.0" width="12" height="1.5" fill="#999" /><rect x="1444" y="202.5" width="9" height="1.5" fill="#999" /><rect x="1441" y="207.0" width="12" height="1.5" fill="#999" /><rect x="1444" y="211.5" width="9" height="1.5" fill="#999" /><path d="M1427.0,188.0 L1432.0,188.0 L1432.0,202.0 L1437.0,202.0 L1437.0,197.0 L1445.0,204.5 L1437.0,212.0 L1437.0,207.0 L1427.0,207.0 Z" fill="url(#greenA)" stroke="#2a7a14" stroke-width="1.3"/><rect x="1428" y="262" width="28" height="5" rx="2.5" fill="#000" opacity="0.3" filter="url(#blur2)"/><rect x="1426.5" y="235.5" width="22" height="30" fill="url(#page)" stroke="#6e6e6e" stroke-width="1.4"/><rect x="1431" y="240.0" width="12" height="1.5" fill="#999" /><rect x="1434" y="244.5" width="9" height="1.5" fill="#999" /><rect x="1431" y="249.0" width="12" height="1.5" fill="#999" /><rect x="1434" y="253.5" width="9" height="1.5" fill="#999" /><path d="M1437,263.5 L1451.5,263.5 L1451.5,244 L1456.5,244 L1448.5,234.5 L1440.5,244 L1445.5,244 L1445.5,258 L1437,258 Z" fill="url(#greenA)" stroke="#2a7a14" stroke-width="1.3"/><rect x="1428" y="310" width="28" height="5" rx="2.5" fill="#000" opacity="0.3" filter="url(#blur2)"/><rect x="1434.5" y="283.5" width="23" height="30" fill="url(#page)" stroke="#6e6e6e" stroke-width="1.4"/><rect x="1439" y="288.0" width="13" height="1.5" fill="#999" /><rect x="1442" y="292.5" width="10" height="1.5" fill="#999" /><rect x="1439" y="297.0" width="13" height="1.5" fill="#999" /><rect x="1442" y="301.5" width="10" height="1.5" fill="#999" /><path d="M1426.5,287.5 L1440,298 L1426.5,308.5 Z" fill="url(#greenA)" stroke="#2a7a14" stroke-width="1.3"/><text x="1440" y="303" font-family="Liberation Serif" font-size="17" font-weight="bold" fill="#000">I</text><rect x="1990" y="229" width="36" height="7" rx="3.5" fill="#000" opacity="0.35" filter="url(#blur2)"/><rect x="1988.5" y="192" width="39.5" height="39.5" rx="4" fill="url(#redq)" stroke="#9a1c1c" stroke-width="1.8"/><rect x="112" y="357.5" width="2559" height="1.5" fill="#ffffff" /><rect x="112" y="359" width="2559" height="45" fill="#eeeeee" /><rect x="342" y="360" width="2323" height="44" fill="#ffffff" stroke="#c6c6c6" stroke-width="1.2"/><text x="391" y="391.5" font-family="Liberation Sans" font-size="26.5" fill="#000" textLength="9" lengthAdjust="spacingAndGlyphs"  xml:space="preserve">/</text><text x="448.75" y="391.5" font-family="Liberation Sans" font-size="26.5" fill="#000" textLength="66.25" lengthAdjust="spacingAndGlyphs"  xml:space="preserve">Users</text><text x="560" y="391.5" font-family="Liberation Sans" font-size="26.5" fill="#000" textLength="38.75" lengthAdjust="spacingAndGlyphs"  xml:space="preserve">jan</text><text x="645.4" y="391.5" font-family="Liberation Sans" font-size="26.5" fill="#000" textLength="105.1" lengthAdjust="spacingAndGlyphs"  xml:space="preserve">teaching</text><text x="797.5" y="391.5" font-family="Liberation Sans" font-size="26.5" fill="#000" textLength="252.5" lengthAdjust="spacingAndGlyphs"  xml:space="preserve">scientificComputing</text><text x="1096" y="391.5" font-family="Liberation Sans" font-size="26.5" fill="#000" textLength="168" lengthAdjust="spacingAndGlyphs"  xml:space="preserve">programming</text><text x="1311" y="391.5" font-family="Liberation Sans" font-size="26.5" fill="#000" textLength="58" lengthAdjust="spacingAndGlyphs"  xml:space="preserve">code</text><path d="M421,376 L429.3,383 L421,390 Z" fill="#000"/><path d="M535,376 L543.3,383 L535,390 Z" fill="#000"/><path d="M618,376 L626.3,383 L618,390 Z" fill="#000"/><path d="M770,376 L778.3,383 L770,390 Z" fill="#000"/><path d="M1069.5,376 L1077.8,383 L1069.5,390 Z" fill="#000"/><path d="M1284,376 L1292.3,383 L1284,390 Z" fill="#000"/><path d="M2641,378 L2657,378 L2649,386 Z" fill="#000"/><path d="M124.0,381.5 L142.0,368.0 L142.0,376.0 L156.5,376.0 L156.5,387.0 L142.0,387.0 L142.0,395.5 Z" fill="url(#blueArrow)" stroke="#1d4f84" stroke-width="1.4"/><path d="M212.0,381.5 L194.0,368.0 L194.0,376.0 L180.0,376.0 L180.0,387.0 L194.0,387.0 L194.0,395.5 Z" fill="#a9a9a9" stroke="#9a9a9a" stroke-width="1"/><path d="M236.5,370.5 L248,370.5 L249,372.5 L267.5,372.5 L267.5,395.5 L237.5,395.5 Z" fill="url(#goldf)" stroke="#8e6420" stroke-width="1.6"/><rect x="249" y="373.5" width="18" height="3" fill="#c89c58" /><path d="M252,381 L252,390 L258,390 M249,383.5 L252,380 L255,383.5" fill="none" stroke="#5a4020" stroke-width="1.8"/><path d="M292,368.5 L303,368.5 L304,370.5 L324,370.5 L324,391 L299,391 Z" fill="url(#tan)" stroke="#8e6420" stroke-width="1.5"/><path d="M293,375 L318,375 L321,391 L299,391 Z" fill="url(#goldf)" stroke="#8e6420" stroke-width="1.2"/><path d="M305,379 L302,390 M299,387 L302,396 L307,389" fill="none" stroke="#3a9a2a" stroke-width="3"/><path d="M347.5,369 L358,369 L361,372 L380,372 L380,396 L347.5,396 Z" fill="url(#bluef)"/><rect x="112" y="403.5" width="2559" height="1160" fill="#1d4f8e" /><rect x="115.5" y="406" width="2552" height="40" fill="url(#edtitle)" /><rect x="115.5" y="406" width="2552" height="1.2" fill="#9fb6d3" opacity="0.8"/><text x="162.5" y="436" font-family="Liberation Sans" font-size="28" fill="#ffffff" textLength="1270.2" lengthAdjust="spacingAndGlyphs"  xml:space="preserve">Editor – /Users/jan/teaching/scientificComputing/programming/code/simplerandomwalk.m</text><rect x="115.5" y="446" width="2552" height="43" fill="#eeeeee" /><rect x="115.5" y="445.8" width="2552" height="1" fill="#f6f6f6" /><rect x="115" y="403.5" width="1.2" height="1160" fill="#ffffff" opacity="0.9"/><path d="M506,489 L506,455 Q506,447 514,447 L558,447 Q566,447 566.5,456 L567,478 Q568,487.5 578,487.5 L2667,487.5 L2667,489 Z" fill="url(#plustab)"/><rect x="566.5" y="447" width="2101" height="40.5" fill="#eeeeee" /><path d="M506,478 L506,455 Q506,447 514,447 L558,447 Q566,447 566.5,456 L567,478 Q568,487.5 578,487.5 L2667,487.5" fill="none" stroke="#8e8e8e" stroke-width="1.8"/><path d="M506,478 Q507,488 518,488 L580,488" fill="none" stroke="#8e8e8e" stroke-width="1.8"/><path d="M116,489 L116,488 L132,488 Q150.5,488 150.5,479 L150.5,455 Q151,447 159,447 L498,447 Q506,447 506,455 L506,489 Z" fill="url(#seltab)"/><path d="M116,487.8 L132,487.8 Q150.5,488 150.5,479 L150.5,455 Q151,447 159,447 L498,447" fill="none" stroke="#8e8e8e" stroke-width="1.8"/><text x="177" y="475" font-family="Liberation Sans" font-size="25" fill="#000" textLength="267.5" lengthAdjust="spacingAndGlyphs"  xml:space="preserve">simplerandomwalk.m</text><path d="M476,462 L491,477 M491,462 L476,477" stroke="#a8a8a8" stroke-width="2.6" stroke-dasharray="2.2 1.2"/><rect x="527.5" y="466" width="20" height="4" fill="#3a3a3a" /><rect x="535.5" y="458" width="4" height="20" fill="#3a3a3a" /><rect x="121" y="451" width="6" height="2" fill="#9a9a9a" /><rect x="121" y="455" width="6" height="2" fill="#9a9a9a" /><rect x="121" y="459" width="6" height="2" fill="#9a9a9a" /><rect x="121" y="463" width="6" height="2" fill="#9a9a9a" /><rect x="121" y="467" width="6" height="2" fill="#9a9a9a" /><rect x="121" y="471" width="6" height="2" fill="#9a9a9a" /><rect x="121" y="475" width="6" height="2" fill="#9a9a9a" /><rect x="121" y="479" width="6" height="2" fill="#9a9a9a" /><rect x="115.5" y="489" width="2552" height="1071" fill="#ffffff" /><rect x="116" y="490" width="43.7" height="1070" fill="#ececec" /><rect x="161.8" y="490" width="22.2" height="1070" fill="#ececec" /><rect x="1441.5" y="490" width="2" height="1070" fill="#c9c9c9" /><rect x="2636" y="490" width="31.5" height="1070" fill="#ededed" /><rect x="2636" y="490" width="1.6" height="1070" fill="#c6c6c6" /><rect x="2641.5" y="490.5" width="23" height="22" fill="url(#okgreen)" stroke="#7a7a7a" stroke-width="1.5"/><rect x="2642" y="539.8" width="22" height="4" fill="#90a4a4" /><rect x="2642" y="607.8" width="22" height="4" fill="#90a4a4" /><rect x="2642" y="709.8" width="22" height="4" fill="#90a4a4" /><rect x="2642" y="1151.8" width="22" height="4" fill="#90a4a4" /><text x="155.3" y="516.2" font-family="Liberation Mono" font-size="26.67" fill="#000" text-anchor="end"  xml:space="preserve">1</text><rect x="167" y="505" width="10.5" height="2.4" fill="#111" /><text x="242.0" y="516.2" font-family="Liberation Mono" font-size="26.67" fill="#000" textLength="224.0" lengthAdjust="spacingAndGlyphs"  xml:space="preserve">num_runs = 10;</text><text x="155.3" y="550.2" font-family="Liberation Mono" font-size="26.67" fill="#000" text-anchor="end"  xml:space="preserve">2</text><rect x="167" y="539" width="10.5" height="2.4" fill="#111" /><rect x="242.0" y="524.5" width="144.0" height="33.5" fill="#c9e6e5" /><text x="242.0" y="550.2" font-family="Liberation Mono" font-size="26.67" fill="#000" textLength="144.0" lengthAdjust="spacingAndGlyphs"  xml:space="preserve">max_steps</text><text x="386.0" y="550.2" font-family="Liberation Mono" font-size="26.67" fill="#000" textLength="128.0" lengthAdjust="spacingAndGlyphs"  xml:space="preserve"> = 1000;</text><text x="155.3" y="584.2" font-family="Liberation Mono" font-size="26.67" fill="#000" text-anchor="end"  xml:space="preserve">3</text><text x="155.3" y="618.2" font-family="Liberation Mono" font-size="26.67" fill="#000" text-anchor="end"  xml:space="preserve">4</text><rect x="167" y="607" width="10.5" height="2.4" fill="#111" /><text x="242.0" y="618.2" font-family="Liberation Mono" font-size="26.67" fill="#000" textLength="288.0" lengthAdjust="spacingAndGlyphs"  xml:space="preserve">positions = zeros(</text><rect x="530.0" y="592.5" width="144.0" height="33.5" fill="#c9e6e5" /><text x="530.0" y="618.2" font-family="Liberation Mono" font-size="26.67" fill="#000" textLength="144.0" lengthAdjust="spacingAndGlyphs"  xml:space="preserve">max_steps</text><text x="674.0" y="618.2" font-family="Liberation Mono" font-size="26.67" fill="#000" textLength="192.0" lengthAdjust="spacingAndGlyphs"  xml:space="preserve">, num_runs);</text><text x="155.3" y="652.2" font-family="Liberation Mono" font-size="26.67" fill="#000" text-anchor="end"  xml:space="preserve">5</text><text x="155.3" y="686.2" font-family="Liberation Mono" font-size="26.67" fill="#000" text-anchor="end"  xml:space="preserve">6</text><text x="242.0" y="686.2" font-family="Liberation Mono" font-size="26.67" fill="#0000ff" textLength="48.0" lengthAdjust="spacingAndGlyphs"  xml:space="preserve">for</text><text x="290.0" y="686.2" font-family="Liberation Mono" font-size="26.67" fill="#000" textLength="272.0" lengthAdjust="spacingAndGlyphs"  xml:space="preserve"> run = 1:num_runs</text><text x="155.3" y="720.2" font-family="Liberation Mono" font-size="26.67" fill="#000" text-anchor="end"  xml:space="preserve">7</text><rect x="167" y="709" width="10.5" height="2.4" fill="#111" /><text x="306.0" y="720.2" font-family="Liberation Mono" font-size="26.67" fill="#0000ff" textLength="48.0" lengthAdjust="spacingAndGlyphs"  xml:space="preserve">for</text><text x="354.0" y="720.2" font-family="Liberation Mono" font-size="26.67" fill="#000" textLength="160.0" lengthAdjust="spacingAndGlyphs"  xml:space="preserve"> step = 2:</text><rect x="514.0" y="694.5" width="144.0" height="33.5" fill="#c9e6e5" /><text x="514.0" y="720.2" font-family="Liberation Mono" font-size="26.67" fill="#000" textLength="144.0" lengthAdjust="spacingAndGlyphs"  xml:space="preserve">max_steps</text><text x="155.3" y="754.2" font-family="Liberation Mono" font-size="26.67" fill="#000" text-anchor="end"  xml:space="preserve">8</text><rect x="167" y="743" width="10.5" height="2.4" fill="#111" /><text x="242.0" y="754.2" font-family="Liberation Mono" font-size="26.67" fill="#000" textLength="336.0" lengthAdjust="spacingAndGlyphs"  xml:space="preserve">        x = randn(1);</text><text x="155.3" y="788.2" font-family="Liberation Mono" font-size="26.67" fill="#000" text-anchor="end"  xml:space="preserve">9</text><rect x="167" y="777" width="10.5" height="2.4" fill="#111" /><text x="370.0" y="788.2" font-family="Liberation Mono" font-size="26.67" fill="#0000ff" textLength="32.0" lengthAdjust="spacingAndGlyphs"  xml:space="preserve">if</text><text x="402.0" y="788.2" font-family="Liberation Mono" font-size="26.67" fill="#000" textLength="96.0" lengthAdjust="spacingAndGlyphs"  xml:space="preserve"> x &lt; 0</text><text x="155.3" y="822.2" font-family="Liberation Mono" font-size="26.67" fill="#000" text-anchor="end"  xml:space="preserve">10</text><rect x="167" y="811" width="10.5" height="2.4" fill="#111" /><text x="242.0" y="822.2" font-family="Liberation Mono" font-size="26.67" fill="#000" textLength="992.0" lengthAdjust="spacingAndGlyphs"  xml:space="preserve">            positions(step, run) = positions(step−1, run) + 1;</text><text x="155.3" y="856.2" font-family="Liberation Mono" font-size="26.67" fill="#000" text-anchor="end"  xml:space="preserve">11</text><rect x="167" y="845" width="10.5" height="2.4" fill="#111" /><text x="370.0" y="856.2" font-family="Liberation Mono" font-size="26.67" fill="#0000ff" textLength="96.0" lengthAdjust="spacingAndGlyphs"  xml:space="preserve">elseif</text><text x="466.0" y="856.2" font-family="Liberation Mono" font-size="26.67" fill="#000" textLength="96.0" lengthAdjust="spacingAndGlyphs"  xml:space="preserve"> x &gt; 0</text><text x="155.3" y="890.2" font-family="Liberation Mono" font-size="26.67" fill="#000" text-anchor="end"  xml:space="preserve">12</text><rect x="167" y="879" width="10.5" height="2.4" fill="#111" /><text x="242.0" y="890.2" font-family="Liberation Mono" font-size="26.67" fill="#000" textLength="992.0" lengthAdjust="spacingAndGlyphs"  xml:space="preserve">            positions(step, run) = positions(step−1, run) − 1;</text><text x="155.3" y="924.2" font-family="Liberation Mono" font-size="26.67" fill="#000" text-anchor="end"  xml:space="preserve">13</text><rect x="167" y="913" width="10.5" height="2.4" fill="#111" /><text x="370.0" y="924.2" font-family="Liberation Mono" font-size="26.67" fill="#0000ff" textLength="48.0" lengthAdjust="spacingAndGlyphs"  xml:space="preserve">end</text><text x="155.3" y="958.2" font-family="Liberation Mono" font-size="26.67" fill="#000" text-anchor="end"  xml:space="preserve">14</text><rect x="167" y="947" width="10.5" height="2.4" fill="#111" /><text x="306.0" y="958.2" font-family="Liberation Mono" font-size="26.67" fill="#0000ff" textLength="48.0" lengthAdjust="spacingAndGlyphs"  xml:space="preserve">end</text><text x="155.3" y="992.2" font-family="Liberation Mono" font-size="26.67" fill="#000" text-anchor="end"  xml:space="preserve">15</text><rect x="167" y="981" width="10.5" height="2.4" fill="#111" /><text x="242.0" y="992.2" font-family="Liberation Mono" font-size="26.67" fill="#0000ff" textLength="48.0" lengthAdjust="spacingAndGlyphs"  xml:space="preserve">end</text><text x="155.3" y="1026.2" font-family="Liberation Mono" font-size="26.67" fill="#000" text-anchor="end"  xml:space="preserve">16</text><text x="155.3" y="1060.2" font-family="Liberation Mono" font-size="26.67" fill="#000" text-anchor="end"  xml:space="preserve">17</text><rect x="167" y="1049" width="10.5" height="2.4" fill="#111" /><text x="242.0" y="1060.2" font-family="Liberation Mono" font-size="26.67" fill="#000" textLength="128.0" lengthAdjust="spacingAndGlyphs"  xml:space="preserve">figure()</text><text x="155.3" y="1094.2" font-family="Liberation Mono" font-size="26.67" fill="#000" text-anchor="end"  xml:space="preserve">18</text><rect x="167" y="1083" width="10.5" height="2.4" fill="#111" /><text x="242.0" y="1094.2" font-family="Liberation Mono" font-size="26.67" fill="#000" textLength="80.0" lengthAdjust="spacingAndGlyphs"  xml:space="preserve">hold </text><text x="322.0" y="1094.2" font-family="Liberation Mono" font-size="26.67" fill="#a020f0" textLength="32.0" lengthAdjust="spacingAndGlyphs"  xml:space="preserve">on</text><text x="155.3" y="1128.2" font-family="Liberation Mono" font-size="26.67" fill="#000" text-anchor="end"  xml:space="preserve">19</text><rect x="167" y="1117" width="10.5" height="2.4" fill="#111" /><text x="242.0" y="1128.2" font-family="Liberation Mono" font-size="26.67" fill="#0000ff" textLength="48.0" lengthAdjust="spacingAndGlyphs"  xml:space="preserve">for</text><text x="290.0" y="1128.2" font-family="Liberation Mono" font-size="26.67" fill="#000" textLength="272.0" lengthAdjust="spacingAndGlyphs"  xml:space="preserve"> run = 1:num_runs</text><text x="155.3" y="1162.2" font-family="Liberation Mono" font-size="26.67" fill="#000" text-anchor="end"  xml:space="preserve">20</text><rect x="167" y="1151" width="10.5" height="2.4" fill="#111" /><text x="242.0" y="1162.2" font-family="Liberation Mono" font-size="26.67" fill="#000" textLength="176.0" lengthAdjust="spacingAndGlyphs"  xml:space="preserve">    plot(1:</text><rect x="418.0" y="1136.5" width="144.0" height="33.5" fill="#c9e6e5" /><text x="418.0" y="1162.2" font-family="Liberation Mono" font-size="26.67" fill="#000" textLength="144.0" lengthAdjust="spacingAndGlyphs"  xml:space="preserve">max_steps</text><text x="562.0" y="1162.2" font-family="Liberation Mono" font-size="26.67" fill="#000" textLength="320.0" lengthAdjust="spacingAndGlyphs"  xml:space="preserve">, positions(:, run))</text><text x="155.3" y="1196.2" font-family="Liberation Mono" font-size="26.67" fill="#000" text-anchor="end"  xml:space="preserve">21</text><rect x="167" y="1185" width="10.5" height="2.4" fill="#111" /><text x="242.0" y="1196.2" font-family="Liberation Mono" font-size="26.67" fill="#0000ff" textLength="48.0" lengthAdjust="spacingAndGlyphs"  xml:space="preserve">end</text><text x="155.3" y="1230.2" font-family="Liberation Mono" font-size="26.67" fill="#000" text-anchor="end"  xml:space="preserve">22</text><rect x="167" y="1219" width="10.5" height="2.4" fill="#111" /><text x="242.0" y="1230.2" font-family="Liberation Mono" font-size="26.67" fill="#000" textLength="112.0" lengthAdjust="spacingAndGlyphs"  xml:space="preserve">xlabel(</text><text x="354.0" y="1230.2" font-family="Liberation Mono" font-size="26.67" fill="#a020f0" textLength="272.0" lengthAdjust="spacingAndGlyphs"  xml:space="preserve">&#x27;Number of steps&#x27;</text><text x="626.0" y="1230.2" font-family="Liberation Mono" font-size="26.67" fill="#000" textLength="16.0" lengthAdjust="spacingAndGlyphs"  xml:space="preserve">)</text><text x="155.3" y="1264.2" font-family="Liberation Mono" font-size="26.67" fill="#000" text-anchor="end"  xml:space="preserve">23</text><rect x="167" y="1253" width="10.5" height="2.4" fill="#111" /><text x="242.0" y="1264.2" font-family="Liberation Mono" font-size="26.67" fill="#000" textLength="112.0" lengthAdjust="spacingAndGlyphs"  xml:space="preserve">ylabel(</text><text x="354.0" y="1264.2" font-family="Liberation Mono" font-size="26.67" fill="#a020f0" textLength="160.0" lengthAdjust="spacingAndGlyphs"  xml:space="preserve">&#x27;Position&#x27;</text><text x="514.0" y="1264.2" font-family="Liberation Mono" font-size="26.67" fill="#000" textLength="16.0" lengthAdjust="spacingAndGlyphs"  xml:space="preserve">)</text><text x="155.3" y="1298.2" font-family="Liberation Mono" font-size="26.67" fill="#000" text-anchor="end"  xml:space="preserve">24</text><rect x="167" y="1287" width="10.5" height="2.4" fill="#111" /><text x="242.0" y="1298.2" font-family="Liberation Mono" font-size="26.67" fill="#000" textLength="64.0" lengthAdjust="spacingAndGlyphs"  xml:space="preserve">box </text><text x="306.0" y="1298.2" font-family="Liberation Mono" font-size="26.67" fill="#a020f0" textLength="48.0" lengthAdjust="spacingAndGlyphs"  xml:space="preserve">off</text><text x="155.3" y="1332.2" font-family="Liberation Mono" font-size="26.67" fill="#000" text-anchor="end"  xml:space="preserve">25</text><text x="155.3" y="1366.2" font-family="Liberation Mono" font-size="26.67" fill="#000" text-anchor="end"  xml:space="preserve">26</text><text x="155.3" y="1400.2" font-family="Liberation Mono" font-size="26.67" fill="#000" text-anchor="end"  xml:space="preserve">27</text><circle cx="172.5" cy="676.2" r="7.9" fill="#fe5f5f" stroke="#000" stroke-width="2"/><path d="M188,672.9000000000001 L195.5,672.9000000000001 L195.5,667.7 L204.5,677.2 L195.5,686.2 L195.5,681.2 L188,681.2 Z" fill="#00e600" stroke="#000" stroke-width="2" stroke-linejoin="miter"/><rect x="223.1" y="684.5" width="1.8" height="298.5" fill="#a8a8a8" /><rect x="222.9" y="947.5" width="9.5" height="1.8" fill="#a8a8a8" /><rect x="222.9" y="981.5" width="9.5" height="1.8" fill="#a8a8a8" /><rect x="215.8" y="667.8" width="16.4" height="16.8" fill="#ffffff" stroke="#a8a8a8" stroke-width="1.7"/><rect x="219.5" y="675.2" width="8.5" height="1.8" fill="#a8a8a8" /><rect x="215.8" y="701.8" width="16.4" height="16.8" fill="#ffffff" stroke="#a8a8a8" stroke-width="1.7"/><rect x="219.5" y="709.2" width="8.5" height="1.8" fill="#a8a8a8" /><rect x="223.1" y="1126.5" width="1.8" height="60.5" fill="#a8a8a8" /><rect x="222.9" y="1185.5" width="9.5" height="1.8" fill="#a8a8a8" /><rect x="215.8" y="1109.8" width="16.4" height="16.8" fill="#ffffff" stroke="#a8a8a8" stroke-width="1.7"/><rect x="219.5" y="1117.2" width="8.5" height="1.8" fill="#a8a8a8" /><rect x="658.0" y="695" width="1.6" height="32" fill="#000" /><rect x="120.5" y="412.5" width="28" height="28" fill="#e8ecf0" stroke="#555" stroke-width="1.8"/><rect x="125" y="417" width="14" height="1.8" fill="#777" /><rect x="125" y="421" width="10" height="1.8" fill="#777" /><path d="M124.5,437 L128,429 L146,411 L151,416 L133,434 Z" fill="#e0b070" stroke="#6a4a20" stroke-width="1.2"/><path d="M144,413 L147.5,409.5 L152.5,414.5 L149,418 Z" fill="#e05a8a"/><path d="M124.5,437 L128,429 L133,434 Z" fill="#333"/><circle cx="2523.9" cy="426" r="11.2" fill="none" stroke="#c6d6e8" stroke-width="1.6"/><path d="M2518,421.5 L2530,421.5 L2524,431 Z" fill="#e8eef6"/><rect x="2571" y="418.5" width="18.5" height="17" fill="none" stroke="#fff" stroke-width="2"/><rect x="2579" y="418.5" width="2.6" height="17" fill="#fff" /><rect x="2571" y="426" width="9" height="2.2" fill="#fff" /><rect x="2574" y="421" width="3" height="3" fill="#fff" /><path d="M2628.5,420.5 L2643.5,434 M2643.5,420.5 L2628.5,434" stroke="#fff" stroke-width="3"/><rect x="112" y="1560" width="2559" height="3.5" fill="#1d4f8e" /><rect x="112" y="1563.5" width="2559" height="46.5" fill="#ededed" /><rect x="122" y="1571" width="5.8" height="31" fill="url(#grip)" /><rect x="130" y="1571" width="5.8" height="31" fill="url(#grip)" /><rect x="138" y="1571" width="5.8" height="31" fill="url(#grip)" /><rect x="146" y="1571" width="5.8" height="31" fill="url(#grip)" /><path d="M156,1590 L166,1590 L161,1584 Z" fill="#333"/><rect x="156" y="1589" width="10" height="2" fill="#333" /><rect x="181.5" y="1570" width="1.2" height="33" fill="#c8c8c8" /><text x="205" y="1596" font-family="Liberation Sans" font-size="27.5" fill="#000" textLength="390" lengthAdjust="spacingAndGlyphs"  xml:space="preserve">4 usages of &quot;max_steps&quot; found</text><rect x="1810" y="1568" width="567" height="36.7" fill="#ececec" /><rect x="1810" y="1568" width="567" height="1.2" fill="#a8a8a8" /><rect x="1810" y="1568" width="1.2" height="36.7" fill="#a8a8a8" /><rect x="1810" y="1603.5" width="567" height="1.2" fill="#fafafa" /><rect x="2382" y="1568" width="253" height="36.7" fill="#ececec" /><rect x="2382" y="1568" width="253" height="1.2" fill="#a8a8a8" /><rect x="2382" y="1568" width="1.2" height="36.7" fill="#a8a8a8" /><rect x="2382" y="1603.5" width="253" height="1.2" fill="#fafafa" /><text x="1821" y="1596" font-family="Liberation Sans" font-size="27.5" fill="#000" textLength="70" lengthAdjust="spacingAndGlyphs"  xml:space="preserve">script</text><text x="2392" y="1596" font-family="Liberation Sans" font-size="27.5" fill="#000" textLength="30" lengthAdjust="spacingAndGlyphs"  xml:space="preserve">Ln</text><text x="2446" y="1596" font-family="Liberation Sans" font-size="27.5" fill="#000" textLength="15.5" lengthAdjust="spacingAndGlyphs"  xml:space="preserve">7</text><text x="2516" y="1596" font-family="Liberation Sans" font-size="27.5" fill="#000" textLength="40" lengthAdjust="spacingAndGlyphs"  xml:space="preserve">Col</text><text x="2583.5" y="1596" font-family="Liberation Sans" font-size="27.5" fill="#000" textLength="30" lengthAdjust="spacingAndGlyphs"  xml:space="preserve">27</text></g></svg></body></html>
